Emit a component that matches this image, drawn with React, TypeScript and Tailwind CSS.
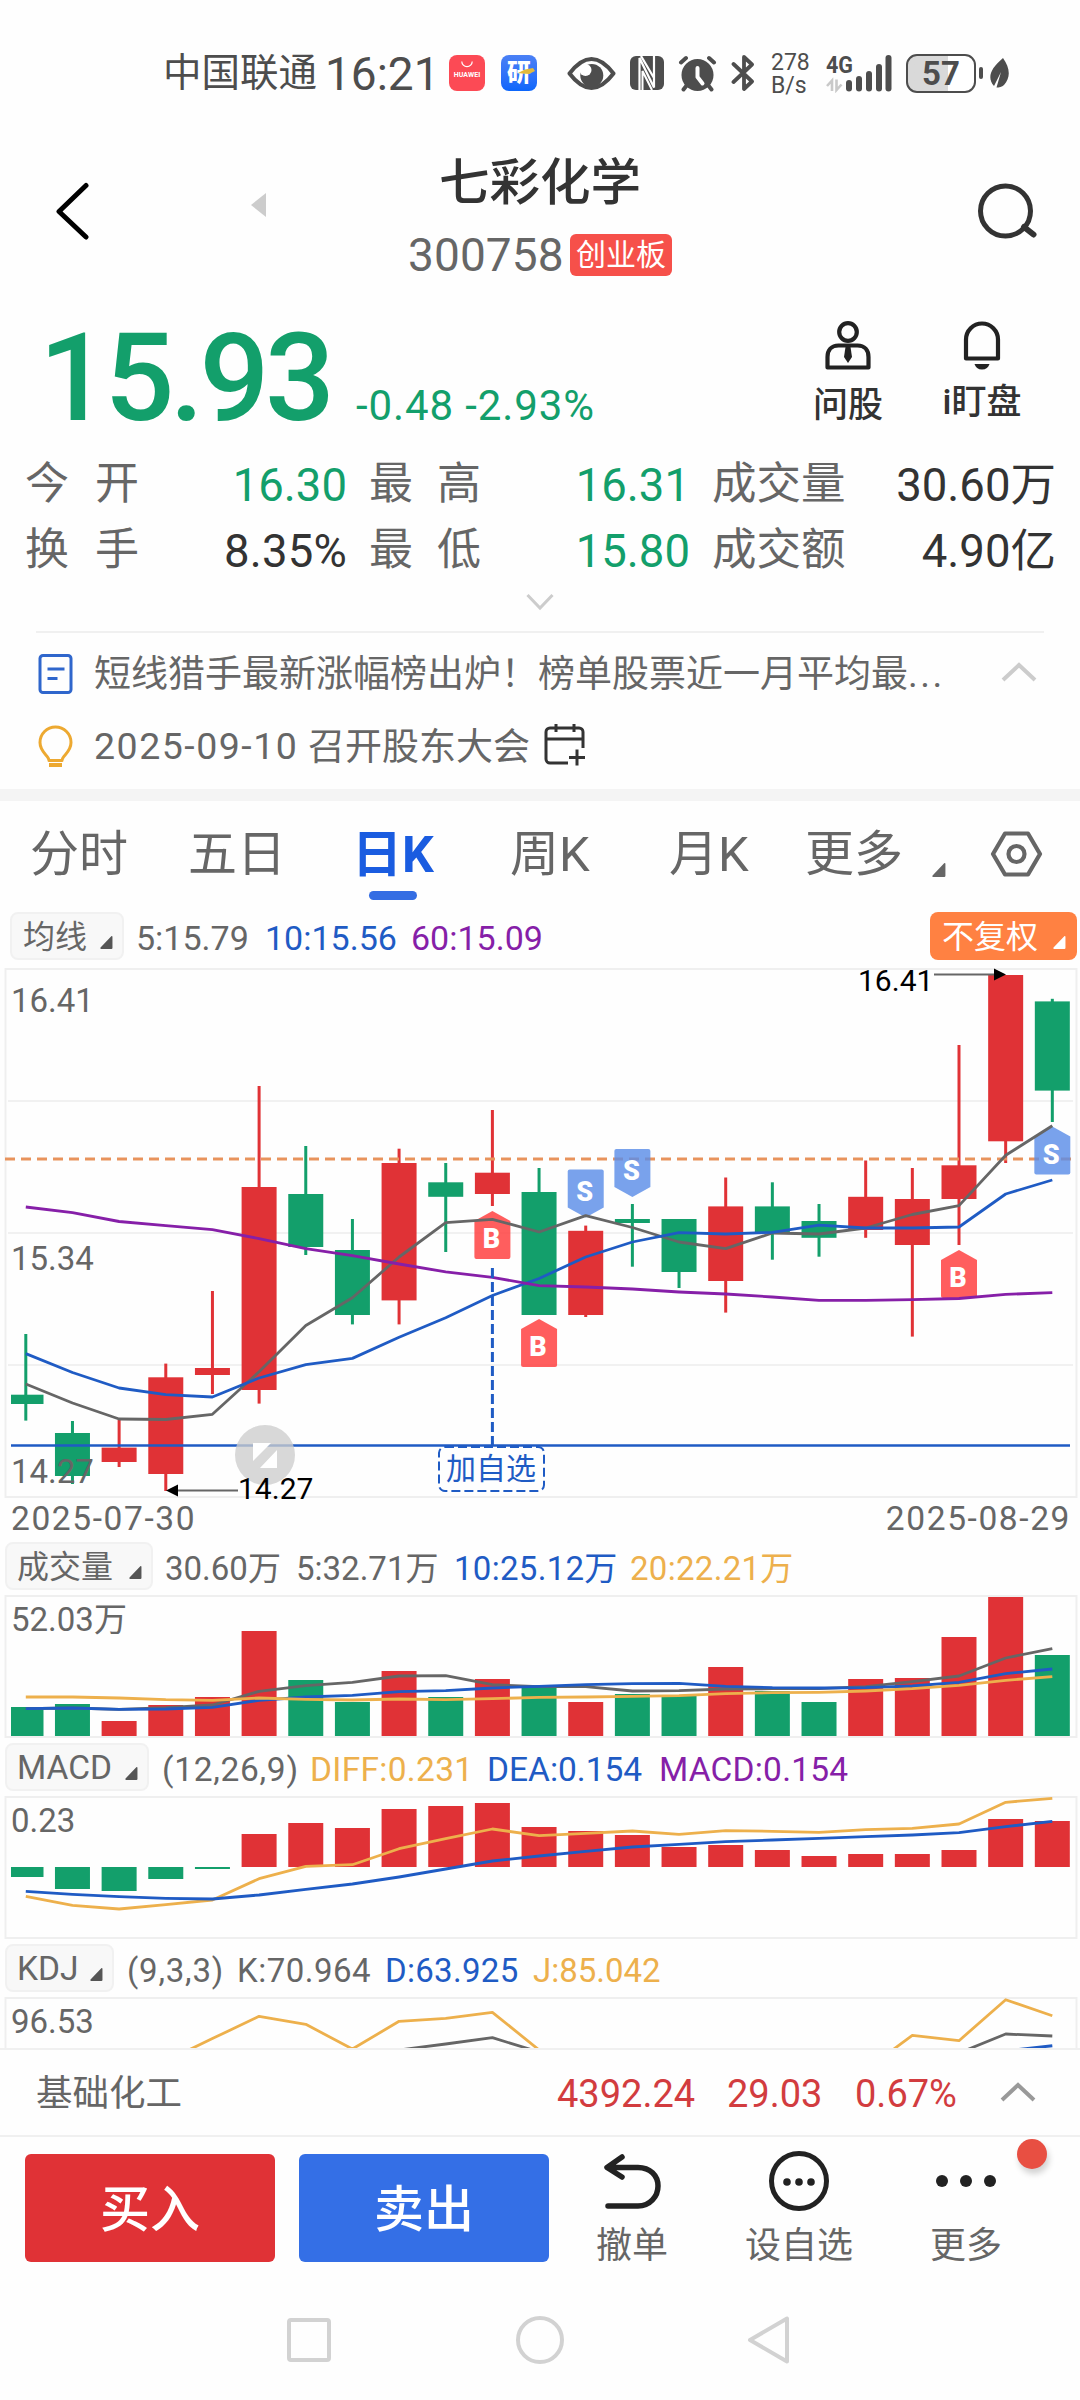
import React from 'react';

const RED = '#e03236';
const GREEN = '#139f6b';
const BLUE = '#1f5bc4';
const GRAY = '#666666';
const ORANGE = '#edb04c';
const PURPLE = '#861fa8';

const STEP = 46.66;
const START = 25.8;
const cx = (i: number) => START + i * STEP;

const toPoints = (values: number[], from = 0) =>
  values.map((v, i) => `${cx(i + from).toFixed(1)},${v}`).join(' ');

interface Candle {
  up: boolean;
  high: number;
  top: number;
  bottom: number;
  low: number;
}

const c = (up: boolean, high: number, top: number, bottom: number, low: number): Candle => ({ up, high, top, bottom, low });

const candles: Candle[] = [
  c(false, 384, 444.7, 454, 470.6),
  c(false, 471, 483, 526, 534),
  c(true, 470, 497.6, 512, 517),
  c(true, 413.6, 427.3, 524, 541),
  c(true, 341, 418, 425, 444),
  c(true, 136, 237, 440, 453.6),
  c(false, 196, 244, 297, 305),
  c(false, 269, 300, 365, 374.4),
  c(true, 198.7, 213, 350.4, 374.4),
  c(false, 213, 232.3, 246.8, 302),
  c(true, 160, 222.7, 244, 256),
  c(false, 218, 242, 365, 365),
  c(true, 275.6, 280.8, 365, 367),
  c(false, 254, 269, 273, 316.7),
  c(false, 269, 269, 322, 338),
  c(true, 227.5, 256.4, 331, 362.6),
  c(false, 232.3, 256.4, 282.3, 309.7),
  c(false, 254, 271, 287.8, 306.7),
  c(true, 210.5, 246.8, 280, 287.8),
  c(true, 218, 249, 295, 386.6),
  c(true, 95, 215.3, 249, 295),
  c(true, 25, 25, 191.3, 213),
  c(false, 48.8, 51.4, 140.6, 172),
];

const ma5 = [434, 453, 469, 469.5, 464.3, 421.8, 375.5, 347.8, 307, 272.7, 269.3, 282, 265.6, 277.5, 292, 298.6, 283, 284, 278, 264.5, 255.6, 205.3, 175.7];
const ma10 = [403.6, 422.5, 438, 444.7, 447, 428, 414.7, 408.4, 387.3, 367.7, 345.5, 328.5, 307, 292, 282.6, 284, 282.3, 275.2, 278, 278, 277, 244, 230];
const ma60 = [257, 262.7, 271.5, 275.6, 279.7, 288.6, 298.6, 305.6, 314, 321.9, 327.4, 335.6, 337, 339, 342, 344, 347, 350.3, 350.3, 349.6, 348.5, 344.4, 342.6];

const volumes = [187, 184, 201, 185, 177, 111, 160, 182, 151, 177, 159, 167, 182, 174, 176, 147, 171, 182, 159, 158, 117, 77, 135];
const vol5 = [188.7, 188, 189.3, 187.7, 185, 171.3, 165.7, 162.3, 156, 155.7, 164.7, 166.7, 166.7, 171, 170.7, 169, 168.7, 168.7, 166.7, 161.7, 156, 138, 128.7];
const vol10 = [188.7, 188, 189.3, 189, 187.3, 180.3, 177, 175.3, 171.7, 170.7, 168, 166.3, 164.7, 163.7, 163.3, 166.3, 167.7, 168, 167.7, 166, 162.3, 153.7, 149];
const vol20 = [177, 177, 178, 179.7, 180.3, 178, 179.3, 180, 179, 179.7, 178.7, 177.3, 177, 176.3, 175.7, 173.7, 172.7, 172.3, 171, 168.7, 165.3, 160.3, 156.7];

const macd = [97, 109, 111, 99, 89, 54, 43, 48, 29, 26, 23, 47, 51, 55, 67, 65, 70, 76, 74, 74, 70, 39, 41];
const diff = [116.3, 125.3, 129, 124.7, 120, 98.7, 86.3, 84.7, 68.7, 58.7, 49, 55.7, 53.3, 51, 54.3, 50.7, 51.3, 52.3, 49.7, 48.3, 44, 22.3, 18.3];
const dea = [111.3, 114.3, 116.7, 118.3, 119, 115, 109.3, 104, 97, 89, 81, 76, 71.3, 67, 64.3, 61.7, 60, 58.3, 56.7, 55, 52.7, 46.7, 41.3];

const kdjJ = [281, 258.6, 236.3, 244.3, 269, 241.3, 238.3, 232.3, 270, 290, 310, 320, 320, 320, 310, 290, 255.3, 260.7, 219.7, 235.7];
const kdjK = [270, 264, 257.7, 272, 290, 300, 300, 300, 300, 300, 300, 290, 273, 254, 256];

const Line = ({ values, color, from = 0, width = 2.8 }: { values: number[]; color: string; from?: number; width?: number }) => (
  <polyline points={toPoints(values, from)} fill="none" stroke={color} strokeWidth={width} strokeLinejoin="round" />
);

const Corner = ({ color = '#555555', size = 13 }: { color?: string; size?: number }) => (
  <svg width={size} height={size} viewBox="0 0 12 12" className="shrink-0">
    <path d="M11.5 0.5V11a1 1 0 0 1-1 1H1a.8.8 0 0 1-.5-1.3L10.2.4a.8.8 0 0 1 1.3.1Z" fill={color} />
  </svg>
);

const Chip = ({ label, className }: { label: string; className: string }) => (
  <div className={`flex h-12 shrink-0 items-center rounded-lg border-2 border-[#f1f1f1] bg-[#f8f8f8] text-[#666] ${className}`}>
    <span className="flex-1 pt-0.5 whitespace-nowrap">{label}</span>
    <span className="mt-3 mr-[9px] flex">
      <Corner />
    </span>
  </div>
);

const StatusBar = () => (
  <div className="flex h-[146px] shrink-0 items-center pl-[163px] text-[#4d4d4d]">
    <span className="w-[162px] pt-px text-[38.5px] whitespace-nowrap">中国联通</span>
    <span className="w-[124px] pt-0.5 text-[46px] whitespace-nowrap">16:21</span>
    <div className="flex h-9 w-9 flex-col items-center rounded-lg bg-[#fc4a55] pt-1.5">
      <svg width="12" height="8" viewBox="0 0 12 8" fill="none" stroke="#fff" strokeWidth="1.2">
        <path d="M0.8 0.5a5.2 5.2 0 0 0 10.4 0" />
      </svg>
      <span className="mt-[3px] text-[7px] font-bold tracking-[0.1px] text-white">HUAWEI</span>
    </div>
    <div className="relative ml-4 flex h-9 w-9 items-center justify-center rounded-lg bg-gradient-to-b from-[#4a80f5] to-[#0b66fb]">
      <span className="text-[24px] font-black text-white">研</span>
      <svg className="absolute top-[13px] left-[17px]" width="17" height="7" viewBox="0 0 17 7">
        <path d="M0 5L7 1.5 15 0l2 3-6 3-7-.5z" fill="#e2b93c" />
      </svg>
    </div>
    <svg className="ml-[30px]" width="49" height="33" viewBox="0 0 48 33">
      <path d="M2 16.5C10 6 17 2 24 2s14 4 22 14.5C38 27 31 31 24 31S10 27 2 16.5Z" fill="none" stroke="#4d4d4d" strokeWidth="4" strokeLinejoin="round" />
      <circle cx="24.3" cy="18.5" r="11.5" fill="#4d4d4d" />
      <circle cx="18" cy="13" r="6" fill="#fff" />
    </svg>
    <svg className="ml-3.5" width="34" height="34" viewBox="0 0 34 34">
      <rect width="34" height="34" rx="6" fill="#4d4d4d" />
      <path d="M9.5 34V2L24 31.5V0M11 0l13 22" fill="none" stroke="#fff" strokeWidth="2.2" />
      <path d="M12.5 34V15l9.5 19" fill="none" stroke="#fff" strokeWidth="2" />
    </svg>
    <svg className="ml-3.5" width="39" height="37" viewBox="0 0 39 37" fill="none" stroke="#4d4d4d" strokeWidth="4" strokeLinecap="round">
      <circle cx="19.5" cy="20" r="16" fill="#4d4d4d" stroke="none" />
      <path d="M3 7.5 8 3M31 3l5 4.5M9 30l-3.5 4.5M30 30l3.5 4.5" />
      <path d="M19.5 13v9l5 6.5" stroke="#fff" strokeWidth="4" strokeLinejoin="round" />
    </svg>
    <svg className="ml-3.5" width="24" height="38" viewBox="0 0 24 38" fill="none" stroke="#4d4d4d" strokeWidth="3.8" strokeLinecap="round" strokeLinejoin="round">
      <path d="M2.5 10 21 27.5 13 35V3l8 7.5L2.5 28" />
    </svg>
    <div className="ml-4 flex w-[55px] flex-col pt-0.5 text-[23px] leading-[23px]">
      <span>278</span>
      <span>B/s</span>
    </div>
    <svg width="66" height="40" viewBox="0 0 66 40">
      <text x="0" y="19.5" fontSize="23" fontWeight="700" fill="#4d4d4d" textLength="27" lengthAdjust="spacingAndGlyphs">4G</text>
      <path d="M6 38V27.5L1 33M10.5 26.5V37l5-5.5" fill="none" stroke="#c9c9c9" strokeWidth="2.6" />
      <g fill="#4d4d4d">
        <rect x="20" y="27" width="6" height="11.5" rx="3" />
        <rect x="30" y="23" width="6" height="15.5" rx="3" />
        <rect x="40" y="18" width="6" height="20.5" rx="3" />
        <rect x="50" y="11" width="6" height="27.5" rx="3" />
        <rect x="59.5" y="2" width="6" height="36.5" rx="3" />
      </g>
    </svg>
    <div className="ml-3.5 flex h-[39px] w-[70px] items-center justify-center rounded-[11px] border-[2.5px] border-[#4d4d4d] bg-gradient-to-r from-[#d9d9d9] from-60% to-white to-60%">
      <span className="text-[33px] font-bold">57</span>
    </div>
    <div className="ml-[3px] h-3 w-1 rounded-full bg-[#4d4d4d]" />
    <svg className="ml-1.5" width="20" height="30" viewBox="0 0 20 30">
      <path d="M14 0c7 10 8 19 1 27-2 2-5 2.5-7.5 2.5L12 14 5 28C-2 20 1 11 14 0Z" fill="#4d4d4d" />
    </svg>
  </div>
);

const Header = () => (
  <div className="flex h-[142px] shrink-0 items-start">
    <svg className="mt-[36px] ml-[55px]" width="36" height="58" viewBox="0 0 36 58" fill="none" stroke="#000" strokeWidth="5" strokeLinecap="round" strokeLinejoin="round">
      <path d="M31 3.5 4 29.5 31 55" />
    </svg>
    <svg className="mt-[47px] ml-[160px]" width="15" height="24" viewBox="0 0 15 24">
      <path d="M15 0v24L0 12z" fill="#ccc" />
    </svg>
    <div className="ml-[141px] flex w-[266px] flex-col items-center">
      <h1 className="mt-[12px] h-[70px] text-[50.5px] font-medium whitespace-nowrap text-[#333]">七彩化学</h1>
      <div className="flex h-[54px] items-center">
        <span className="w-[162px] text-[46px] tracking-[0.1px] text-[#666]">300758</span>
        <span className="flex h-[42px] w-[102px] items-center justify-center rounded-md bg-[#f6504a] pb-px text-[30px] whitespace-nowrap text-white">创业板</span>
      </div>
    </div>
    <svg className="mt-[36px] ml-[303px]" width="64" height="58" viewBox="0 0 64 58" fill="none" stroke="#333" strokeWidth="5">
      <circle cx="29.5" cy="29" r="25" />
      <path d="M48 45l9.5 7.5" strokeLinecap="round" strokeWidth="6" />
    </svg>
  </div>
);

const Price = () => (
  <div className="flex h-[160px] shrink-0 items-start">
    <span className="mt-[29px] ml-[39px] w-[317px] text-[123px] font-medium tracking-[-4.5px] text-[#139f6b]">15.93</span>
    <span className="mt-[97px] w-[457px] text-[42px] tracking-[0.9px] whitespace-nowrap text-[#139f6b]">-0.48 -2.93%</span>
    <div className="mt-[33px] flex w-[70px] flex-col items-center">
      <svg width="46" height="49" viewBox="0 0 46 49" fill="none" stroke="#222" strokeWidth="4.2">
        <circle cx="23" cy="11" r="8.8" />
        <path d="M2.5 46.5V36c0-7 4-11.5 11-11.5h19c7 0 11 4.5 11 11.5v10.5Z" strokeLinejoin="round" />
        <path d="M20.5 26h5l1.5 10-4 6-4-6z" fill="#222" stroke="none" />
      </svg>
      <span className="mt-[18px] text-[35px] font-medium whitespace-nowrap text-[#333]">问股</span>
    </div>
    <div className="mt-[33px] ml-[56px] flex w-[86px] flex-col items-center">
      <svg width="38" height="49" viewBox="0 0 38 49" fill="none" stroke="#222" strokeWidth="4.2">
        <path d="M3 37.5V18.5a16 16 0 0 1 32 0v19Z" strokeLinejoin="round" />
        <path d="M11.5 43h15c-1 3.5-3.5 5.5-7.5 5.5s-6.5-2-7.5-5.5z" fill="#222" stroke="none" />
      </svg>
      <span className="mt-[15px] text-[35px] font-medium whitespace-nowrap text-[#333]">i盯盘</span>
    </div>
  </div>
);

interface QuoteRow {
  a: string[];
  av: string;
  aClass: string;
  b: string[];
  bv: string;
  last: string;
  lv: string;
}

const quoteRows: QuoteRow[] = [
  { a: ['今', '开'], av: '16.30', aClass: 'text-[#139f6b]', b: ['最', '高'], bv: '16.31', last: '成交量', lv: '30.60万' },
  { a: ['换', '手'], av: '8.35%', aClass: 'text-[#333] tracking-[0.2px]', b: ['最', '低'], bv: '15.80', last: '成交额', lv: '4.90亿' },
];

const Quotes = () => (
  <div className="flex h-[183px] shrink-0 flex-col pt-[3px]">
    {quoteRows.map((row) => (
      <div key={row.last} className="flex h-[66px] items-center text-[45.5px] text-[#666]">
        <span className="ml-[25px] flex w-[114px] justify-between text-[44px]">
          {row.a.map((ch) => (
            <span key={ch}>{ch}</span>
          ))}
        </span>
        <span className={`mt-[3px] w-[208px] text-right ${row.aClass}`}>{row.av}</span>
        <span className="ml-[22px] flex w-[112px] justify-between text-[44px]">
          {row.b.map((ch) => (
            <span key={ch}>{ch}</span>
          ))}
        </span>
        <span className="mt-[3px] w-[209px] text-right text-[#139f6b]">{row.bv}</span>
        <span className="ml-[22px] w-[134px] text-[44.5px] whitespace-nowrap">{row.last}</span>
        <span className="mt-[3px] w-[210px] text-right whitespace-nowrap text-[#333]">{row.lv}</span>
      </div>
    ))}
    <svg className="mt-[10px] self-center" width="28" height="18" viewBox="0 0 28 18" fill="none" stroke="#ccc" strokeWidth="3">
      <path d="M1.5 2 14 15 26.5 2" />
    </svg>
  </div>
);

const News = () => (
  <div className="mx-[36px] h-[158px] shrink-0 border-t-2 border-[#f0f0f0] text-[#666]">
    <div className="flex h-[82px] items-center">
      <svg width="38" height="42" viewBox="0 0 38 42" fill="none" stroke="#2f66cc" strokeWidth="3">
        <rect x="4" y="2.5" width="31" height="37" rx="3" />
        <path d="M11.5 16h17M11.5 25.5h10" />
      </svg>
      <span className="ml-[20px] w-[852px] text-[37px] whitespace-nowrap">
        短线猎手最新涨幅榜出炉！榜单股票近一月平均最<span className="tracking-[2.5px]">...</span>
      </span>
      <svg className="-mt-1 ml-[54px]" width="38" height="22" viewBox="0 0 38 22" fill="none" stroke="#ccc" strokeWidth="4">
        <path d="M3 19 19 4l16 15" />
      </svg>
    </div>
    <div className="flex h-[64px] items-center">
      <svg width="38" height="44" viewBox="0 0 38 44" fill="none" stroke="#eda931" strokeWidth="3">
        <path d="M13 35.5c0-5-9-8-9-18a15.5 15.5 0 0 1 31 0c0 10-9 13-9 18Z" strokeLinejoin="round" />
        <path d="M13 40h13" strokeWidth="4" />
      </svg>
      <span className="ml-[20px] w-[214px] text-[37.5px] tracking-[1.5px] whitespace-nowrap">2025-09-10</span>
      <span className="text-[37px] whitespace-nowrap">召开股东大会</span>
      <svg className="-mt-1 ml-[14px]" width="42" height="44" viewBox="0 0 42 44" fill="none" stroke="#333" strokeWidth="3">
        <path d="M39 25V9a4 4 0 0 0-4-4H6a4 4 0 0 0-4 4v27a4 4 0 0 0 4 4h18M2 16h37M12 1v8M30 1v8M25 34.5h16M33 26.5v16" />
      </svg>
    </div>
  </div>
);

const tabs = [
  { label: '分时', width: 'w-[158px]' },
  { label: '五日', width: 'w-[162px]' },
  { label: '日K', width: 'w-[160px]', active: true },
  { label: '周K', width: 'w-[159px]' },
  { label: '月K', width: 'w-[136px]' },
  { label: '更多', width: 'w-[126px]' },
];

const Tabs = () => (
  <div className="flex h-[111px] shrink-0 items-start pl-[30px] text-[49px] text-[#666]">
    {tabs.map((tab) => (
      <div key={tab.label} className={`shrink-0 pt-[29px] ${tab.width}`}>
        {tab.active ? (
          <div className="flex w-[86px] flex-col items-center">
            <span className="text-[50px] font-bold whitespace-nowrap text-[#1a5ce0]">{tab.label}</span>
            <div className="mt-[11px] h-[9px] w-[48px] rounded-full bg-[#346de3]" />
          </div>
        ) : (
          <span className="whitespace-nowrap">{tab.label}</span>
        )}
      </div>
    ))}
    <span className="mt-[62px] ml-px flex">
      <Corner size={14} color="#666" />
    </span>
    <svg className="mt-[30px] ml-[44px]" width="53" height="46" viewBox="0 0 53 46" fill="none" stroke="#666" strokeWidth="4.2">
      <path d="M15 2.5h23L50 23 38 43.5H15L3 23Z" strokeLinejoin="round" />
      <circle cx="26.5" cy="23" r="8" />
    </svg>
  </div>
);

const LegendItem = ({ text, className }: { text: string; className: string }) => (
  <span className={`shrink-0 whitespace-nowrap ${className}`}>{text}</span>
);

const Marker = ({ i, tip, kind, down = false }: { i: number; tip: number; kind: 'B' | 'S'; down?: boolean }) => {
  const x = cx(i);
  const dir = down ? -1 : 1;
  const far = tip + dir * 48;
  const shoulder = tip + dir * 10;
  return (
    <g>
      <path
        d={`M${x} ${tip}L${x + 18} ${shoulder}V${far - dir * 2}Q${x + 18} ${far} ${x + 16} ${far}H${x - 16}Q${x - 18} ${far} ${x - 18} ${far - dir * 2}V${shoulder}Z`}
        fill={kind === 'B' ? '#ff3b3b' : '#5b8ee8'}
        fillOpacity={0.82}
      />
      <text x={x - 1} y={down ? tip - 17 : tip + 37} fontSize="27" fontWeight="900" fill="#fff" textAnchor="middle">
        {kind}
      </text>
    </g>
  );
};

const MainChart = () => (
  <svg className="block shrink-0 overflow-visible" width="1080" height="536" viewBox="0 14 1080 536">
    <rect x="5.5" y="19" width="1071" height="528" fill="none" stroke="#efefef" strokeWidth="2" />
    {[151, 283, 415].map((y) => (
      <path key={y} d={`M8 ${y}H1073`} stroke="#f1f1f1" strokeWidth="2" />
    ))}
    {candles.map((k, i) => {
      const left = i === 0 ? 11 : cx(i) - 17.5;
      const width = i === 0 ? 32.5 : 35;
      return (
        <g key={i} fill={k.up ? RED : GREEN}>
          <rect x={cx(i) - 1.5} y={k.high} width="3" height={k.low - k.high} />
          <rect x={left} y={k.top} width={width} height={k.bottom - k.top} />
        </g>
      );
    })}
    <path d="M5 209H1076" stroke="#e8935c" strokeWidth="3" strokeDasharray="10 6" />
    <Marker i={10} tip={261} kind="B" />
    <Marker i={11} tip={369} kind="B" />
    <Marker i={20} tip={300} kind="B" />
    <Marker i={12} tip={267.5} kind="S" down />
    <Marker i={13} tip={247} kind="S" down />
    <Marker i={22} tip={176.5} kind="S" />
    <Line values={ma5} color={GRAY} />
    <Line values={ma10} color={BLUE} />
    <Line values={ma60} color={PURPLE} />
    <path d={`M${cx(10)} 318V496`} stroke={BLUE} strokeWidth="3" strokeDasharray="10 4" />
    <path d="M11 495.5H1070" stroke={BLUE} strokeWidth="2.4" />
    <rect x="439" y="497" width="105" height="44" rx="6" fill="none" stroke={BLUE} strokeWidth="2" strokeDasharray="9 4" />
    <text x="491" y="529" fontSize="30" fill={BLUE} textAnchor="middle">加自选</text>
    <g fontSize="33" fill={GRAY}>
      <text x="11" y="62">16.41</text>
      <text x="11" y="320">15.34</text>
      <text x="11" y="533">14.27</text>
    </g>
    <circle cx="265" cy="505" r="30" fill="#cdcdcd" fillOpacity="0.78" />
    <path d="M253 493h18l-18 18zM277 500v18h-17z" fill="#fff" />
    <path d="M170 540.5H238M934 24.5H1000" stroke="#666" strokeWidth="2" />
    <path d="M166 540.5l12-6v12zM1006 24.5l-12-6v12z" fill="#000" />
    <g fontSize="30" fill="#000">
      <text x="238" y="549">14.27</text>
      <text x="858" y="41">16.41</text>
    </g>
  </svg>
);

const VolumeChart = () => (
  <svg className="block shrink-0" width="1080" height="146" viewBox="0 74 1080 146">
    <rect x="5.5" y="76" width="1071" height="141" fill="none" stroke="#efefef" strokeWidth="2" />
    {volumes.map((top, i) => (
      <rect key={i} x={i === 0 ? 11 : cx(i) - 17.5} y={top} width={i === 0 ? 32.5 : 35} height={216 - top} fill={candles[i].up ? RED : GREEN} />
    ))}
    <Line values={vol5} color={GRAY} />
    <Line values={vol10} color={BLUE} />
    <Line values={vol20} color={ORANGE} />
    <text x="11" y="111" fontSize="33" fill={GRAY}>52.03万</text>
  </svg>
);

const MacdChart = () => (
  <svg className="block shrink-0" width="1080" height="146" viewBox="0 14 1080 146">
    <rect x="5.5" y="17" width="1071" height="141" fill="none" stroke="#efefef" strokeWidth="2" />
    {macd.map((y, i) => (
      <rect
        key={i}
        x={i === 0 ? 11 : cx(i) - 17.5}
        y={Math.min(y, 87)}
        width={i === 0 ? 32.5 : 35}
        height={Math.abs(y - 87)}
        fill={y < 87 ? RED : GREEN}
      />
    ))}
    <Line values={diff} color={ORANGE} />
    <Line values={dea} color={BLUE} />
    <text x="11" y="52" fontSize="33" fill={GRAY}>0.23</text>
  </svg>
);

const KdjChart = () => (
  <svg className="block shrink-0" width="1080" height="53" viewBox="0 215 1080 53">
    <path d="M5.5 268V218H1076.5V268" fill="none" stroke="#efefef" strokeWidth="2" />
    <Line values={kdjJ} from={3} color={ORANGE} />
    <Line values={kdjK} from={8} color={GRAY} />
    <path d={`M${cx(21)} 271L${cx(22)} 265.7`} stroke={BLUE} strokeWidth="3" />
    <text x="11" y="252.5" fontSize="33" fill={GRAY}>96.53</text>
  </svg>
);

const IndustryRow = () => (
  <div className="flex h-[89px] shrink-0 items-center border-y-2 border-[#f0f0f0] pt-[3px] text-[38px] text-[#d23c3f]">
    <span className="ml-[36px] w-[521px] text-[36.5px] text-[#666]">基础化工</span>
    <span className="w-[170px]">4392.24</span>
    <span className="w-[128px]">29.03</span>
    <span className="w-[145px]">0.67%</span>
    <svg className="-mt-[5px]" width="36" height="22" viewBox="0 0 36 22" fill="none" stroke="#999" strokeWidth="4">
      <path d="M2 19 18 4l16 15" />
    </svg>
  </div>
);

const ActionBar = () => (
  <div className="relative flex h-[160px] shrink-0 items-start text-[36px] text-[#666]">
    <button className="mt-[17px] ml-[25px] h-[108px] w-[250px] rounded-md bg-[#e03236] pt-1 text-[50px] font-medium text-white">买入</button>
    <button className="mt-[17px] ml-[24px] h-[108px] w-[250px] rounded-md bg-[#346fe6] pt-1 text-[50px] font-medium text-white">卖出</button>
    <div className="mt-[13px] ml-[47px] flex w-[72px] flex-col items-center">
      <svg width="60" height="62" viewBox="0 0 60 62" fill="none" stroke="#222" strokeWidth="5.5" strokeLinecap="round" strokeLinejoin="round">
        <path d="M20 7 5 17.5 20 27M6 17.5h30c12 0 20 8 20 18.5S48 56 36 56H6" />
      </svg>
      <span className="mt-[16px] whitespace-nowrap">撤单</span>
    </div>
    <div className="mt-[13px] ml-[76px] flex w-[110px] flex-col items-center">
      <svg width="62" height="62" viewBox="0 0 62 62" fill="none" stroke="#222" strokeWidth="5">
        <circle cx="31" cy="31" r="27.5" />
        <g fill="#222" stroke="none">
          <circle cx="19" cy="32" r="3.8" />
          <circle cx="31" cy="32" r="3.8" />
          <circle cx="43" cy="32" r="3.8" />
        </g>
      </svg>
      <span className="mt-[16px] whitespace-nowrap">设自选</span>
    </div>
    <div className="mt-[13px] ml-[76px] flex w-[72px] flex-col items-center">
      <svg width="62" height="62" viewBox="0 0 62 62" fill="#222">
        <circle cx="7" cy="31" r="6" />
        <circle cx="31" cy="31" r="6" />
        <circle cx="55" cy="31" r="6" />
      </svg>
      <span className="mt-[16px] whitespace-nowrap">更多</span>
    </div>
    <div className="absolute top-[2px] left-[1017px] h-[30px] w-[30px] rounded-full bg-[#e84f42] shadow-[2px_5px_6px_rgba(0,0,0,0.18)]" />
  </div>
);

const NavBar = () => (
  <div className="flex h-[102px] shrink-0 items-start pt-[18px]">
    <svg className="ml-[286px]" width="46" height="50" viewBox="0 0 46 50" fill="none" stroke="#d2d2d2" strokeWidth="4">
      <rect x="3" y="5" width="40" height="40" rx="2" />
    </svg>
    <svg className="ml-[183px]" width="50" height="50" viewBox="0 0 50 50" fill="none" stroke="#d2d2d2" strokeWidth="4">
      <circle cx="25" cy="25" r="22" />
    </svg>
    <svg className="ml-[182px]" width="44" height="50" viewBox="0 0 44 50" fill="none" stroke="#d2d2d2" strokeWidth="4" strokeLinejoin="round">
      <path d="M40 3.5v43L3 25Z" />
    </svg>
  </div>
);

export default function App() {
  return (
    <div className="flex h-[2400px] w-[1080px] flex-col overflow-hidden bg-[#fefefe] font-['Roboto','Noto_Sans_CJK_SC',sans-serif] leading-none">
      <StatusBar />
      <Header />
      <Price />
      <Quotes />
      <News />
      <div className="h-3 shrink-0 bg-[#f4f4f4]" />
      <Tabs />

      {/* Moving averages */}
      <div className="flex h-[52px] shrink-0 items-start text-[34px] text-[#666]">
        <Chip label="均线" className="ml-[10px] w-[114px] pl-[11px] text-[32px]" />
        <div className="flex h-12 items-center pt-1">
          <LegendItem text="5:15.79" className="ml-[12px] w-[129px]" />
          <LegendItem text="10:15.56" className="w-[146px] text-[#1f5bc4]" />
          <LegendItem text="60:15.09" className="w-[519px] text-[#861fa8]" />
        </div>
        <div className="flex h-12 w-[147px] items-center rounded-lg bg-[#ff8142] pl-[12px] text-[32px] whitespace-nowrap text-white">
          <span className="w-[111px] pt-px">不复权</span>
          <span className="mt-3 flex">
            <Corner color="#fff" />
          </span>
        </div>
      </div>
      <MainChart />
      <div className="flex h-[42px] shrink-0 justify-between pt-[2px] pr-[9px] pl-[11px] text-[33.5px] tracking-[1.6px] text-[#666]">
        <span>2025-07-30</span>
        <span>2025-08-29</span>
      </div>

      {/* Volume */}
      <div className="flex h-[52px] shrink-0 items-start text-[33px] text-[#666]">
        <Chip label="成交量" className="ml-[5px] w-[148px] pl-[10px] text-[32px]" />
        <div className="flex h-12 items-center pt-1">
          <LegendItem text="30.60万" className="ml-[12px] w-[131px]" />
          <LegendItem text="5:32.71万" className="w-[158px]" />
          <LegendItem text="10:25.12万" className="w-[176px] tracking-[0.3px] text-[#1f5bc4]" />
          <LegendItem text="20:22.21万" className="tracking-[0.3px] text-[#edb04c]" />
        </div>
      </div>
      <VolumeChart />

      {/* MACD */}
      <div className="mt-[3px] flex h-[51px] shrink-0 items-start text-[33.5px] text-[#666]">
        <Chip label="MACD" className="ml-[5px] w-[144px] pl-[10px] text-[33.5px]" />
        <div className="flex h-12 items-center pt-[5px]">
          <LegendItem text="(12,26,9)" className="ml-[13px] w-[148px] tracking-[0.7px]" />
          <LegendItem text="DIFF:0.231" className="w-[177px] tracking-[0.3px] text-[#edb04c]" />
          <LegendItem text="DEA:0.154" className="w-[172px] text-[#1f5bc4]" />
          <LegendItem text="MACD:0.154" className="tracking-[0.2px] text-[#861fa8]" />
        </div>
      </div>
      <MacdChart />

      {/* KDJ */}
      <div className="mt-[4px] flex h-[51px] shrink-0 items-start text-[33px] text-[#666]">
        <Chip label="KDJ" className="ml-[5px] w-[109px] pl-[10px] text-[33.5px]" />
        <div className="flex h-12 items-center pt-1">
          <LegendItem text="(9,3,3)" className="ml-[13px] w-[110px] tracking-[0.8px]" />
          <LegendItem text="K:70.964" className="w-[148px] tracking-[0.5px]" />
          <LegendItem text="D:63.925" className="w-[148px] tracking-[0.3px] text-[#1f5bc4]" />
          <LegendItem text="J:85.042" className="text-[#edb04c]" />
        </div>
      </div>
      <KdjChart />

      <IndustryRow />
      <ActionBar />
      <NavBar />
    </div>
  );
}
